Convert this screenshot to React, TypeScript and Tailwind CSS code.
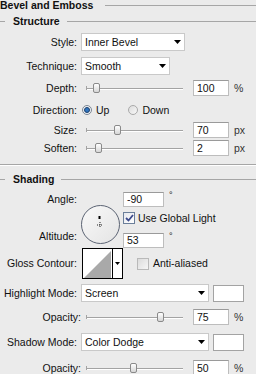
import React from 'react';

const FONT = { fontFamily: '"Liberation Sans", Arial, sans-serif' };

function Label({ text, w = 'w-[77px]' }: { text: string; w?: string }) {
    return <span className={`${w} shrink-0 text-right whitespace-nowrap`}>{text}</span>;
}

function Arrow() {
    return (
        <svg width="7" height="4" viewBox="0 0 7 4" className="shrink-0">
            <path d="M0 0H7L3.5 4Z" fill="#000" />
        </svg>
    );
}

function Dropdown({ text, w }: { text: string; w: string }) {
    return (
        <div className={`${w} h-[18px] ml-[4px] bg-white border border-[#c9c9c9] flex items-center pl-[3px] pr-[3px]`}>
            <span className="flex-1">{text}</span>
            <Arrow />
        </div>
    );
}

function NumInput({ value, w = 'w-[36px]', h = 'h-[16px]' }: { value: string; w?: string; h?: string }) {
    return (
        <div className={`${w} ${h} bg-white border border-[#bdbdbd] border-t-[#9a9a9a] flex items-center pl-[3px]`}>
            {value}
        </div>
    );
}

function Slider({ pct }: { pct: number }) {
    return (
        <div className="relative w-[97px] h-[16px] ml-[5px]">
            <div className="absolute left-0 right-0 top-[8px] h-px bg-[#a3a3a3]" />
            <div className="absolute left-0 right-0 top-[9px] h-px bg-white" />
            <div className="absolute left-0 top-[6px] w-px h-[4px] bg-[#a3a3a3]" />
            <div
                className="absolute top-[3px] w-[7px] h-[10px] -ml-[3px] rounded-[2px] border border-[#8a8a8a] bg-gradient-to-b from-white to-[#d6d6d6]"
                style={{ left: `${pct}%` }}
            />
        </div>
    );
}

function SliderRow({ label, pct, value, unit, mt, lw = 'w-[77px]', lml = 'ml-[4px]' }: {
    label: string; pct: number; value: string; unit: string; mt: string; lw?: string; lml?: string;
}) {
    return (
        <div className={`flex items-center h-[16px] ${mt}`}>
            <Label text={label} w={lw} />
            <div className={lml} />
            <Slider pct={pct} />
            <div className="ml-[10px]">
                <NumInput value={value} />
            </div>
            <span className="ml-[5px] text-[#333]">{unit}</span>
        </div>
    );
}

function SectionTitle({ text, mt, lead }: { text: string; mt: string; lead: boolean }) {
    return (
        <div className={`flex items-center h-[10px] ${mt}`}>
            {lead && <div className="w-[5px] h-px bg-[#a6a6a6] mr-[8px]" />}
            <span className="font-bold text-[10.5px] whitespace-nowrap">{text}</span>
            <div className={`flex-1 h-px bg-[#a6a6a6] ${lead ? 'ml-[7px]' : 'ml-[12px]'}`} />
        </div>
    );
}

function Checkbox({ checked }: { checked: boolean }) {
    return (
        <div className={`w-[12px] h-[12px] shrink-0 border flex items-center justify-center ${checked ? 'border-[#6b7f9a] bg-gradient-to-br from-[#e6e8ee] to-white' : 'border-[#b9b9b9] bg-gradient-to-br from-[#dcdcdc] to-[#f6f6f6]'}`}>
            {checked && (
                <svg width="9" height="8" viewBox="0 0 9 8">
                    <path d="M1 4L3.5 6.5L8 1" stroke="#3c4a8c" strokeWidth="1.8" fill="none" />
                </svg>
            )}
        </div>
    );
}

export default function App() {
    return (
        <div className="w-[256px] h-[374px] overflow-hidden bg-[#ebebeb] text-[10.5px] leading-none text-[#111]" style={FONT}>
            <SectionTitle text="Bevel and Emboss" mt="mt-0" lead={false} />
            <SectionTitle text="Structure" mt="mt-[6px]" lead />

            <div className="flex items-center h-[18px] mt-[7px]">
                <Label text="Style:" />
                <Dropdown text="Inner Bevel" w="w-[104px]" />
            </div>
            <div className="flex items-center h-[18px] mt-[6px]">
                <Label text="Technique:" />
                <Dropdown text="Smooth" w="w-[89px]" />
            </div>

            <SliderRow label="Depth:" pct={10} value="100" unit="%" mt="mt-[5px]" />

            <div className="flex items-center h-[16px] mt-[6px]">
                <Label text="Direction:" />
                <div className="ml-[5px] w-[10px] h-[10px] rounded-full border border-[#7c8794] bg-[#eef0f3] flex items-center justify-center">
                    <div className="w-[6px] h-[6px] rounded-full bg-[#2f75bf] border border-[#1d3f6b]" />
                </div>
                <span className="ml-[4px]">Up</span>
                <div className="ml-[19px] w-[10px] h-[10px] rounded-full border border-[#a9a9a9] bg-gradient-to-br from-[#dcdcdc] to-[#f8f8f8]" />
                <span className="ml-[4px]">Down</span>
            </div>

            <SliderRow label="Size:" pct={32} value="70" unit="px" mt="mt-[4px]" />
            <SliderRow label="Soften:" pct={12} value="2" unit="px" mt="mt-[2px]" />

            <div className="mt-[8px] h-px bg-[#a6a6a6]" />
            <div className="h-px bg-white" />

            <SectionTitle text="Shading" mt="mt-[8px]" lead />

            <div className="flex h-[56px] mt-[8px]">
                <div className="w-[77px] shrink-0 flex flex-col text-right">
                    <div className="h-[15px] flex items-center justify-end">Angle:</div>
                    <div className="mt-auto mb-[4px] h-[15px] flex items-center justify-end">Altitude:</div>
                </div>
                <div className="relative ml-[4px] mt-[13px] w-[39px] h-[39px] rounded-full border-[1.5px] border-[#5c6474] bg-gradient-to-br from-[#f9f9f9] to-[#e4e4e4]">
                    <svg className="absolute left-0 top-0" width="36" height="36" viewBox="0 0 36 36">
                        <rect x="16.5" y="10" width="2" height="3" fill="#000" />
                        <path d="M18 16V22M15 19H21" stroke="#222" strokeWidth="1" strokeDasharray="1 1" />
                    </svg>
                </div>
                <div className="ml-[3px] flex flex-col">
                    <div className="flex">
                        <NumInput value="-90" w="w-[41px]" h="h-[15px]" />
                        <span className="ml-[5px] -mt-[1px] text-[9px]">°</span>
                    </div>
                    <div className="flex items-center mt-[5px] h-[12px]">
                        <Checkbox checked />
                        <span className="ml-[3px] whitespace-nowrap">Use Global Light</span>
                    </div>
                    <div className="flex mt-auto">
                        <NumInput value="53" w="w-[41px]" h="h-[15px]" />
                        <span className="ml-[5px] -mt-[1px] text-[9px]">°</span>
                    </div>
                </div>
            </div>

            <div className="flex items-center h-[31px]">
                <Label text="Gloss Contour:" />
                <div className="ml-[5px] w-[41px] h-[31px] border border-black bg-white flex">
                    <svg width="29" height="29" viewBox="0 0 29 29" className="shrink-0">
                        <path d="M1 29L28 2V29Z" fill="#a9a9a9" />
                    </svg>
                    <div className="w-px h-full bg-black" />
                    <div className="flex-1 flex items-center justify-center">
                        <svg width="5" height="3" viewBox="0 0 5 3">
                            <path d="M0 0H5L2.5 3Z" fill="#000" />
                        </svg>
                    </div>
                </div>
                <div className="ml-[14px]">
                    <Checkbox checked={false} />
                </div>
                <span className="ml-[4px] whitespace-nowrap">Anti-aliased</span>
            </div>

            <div className="flex items-center h-[18px] mt-[5px]">
                <Label text="Highlight Mode:" />
                <Dropdown text="Screen" w="w-[128px]" />
                <div className="ml-[4px] w-[31px] h-[17px] bg-white border border-[#a3a3a3]" />
            </div>
            <SliderRow label="Opacity:" pct={76} value="75" unit="%" mt="mt-[7px]" lw="w-[81px]" lml="ml-0" />

            <div className="flex items-center h-[18px] mt-[8px]">
                <Label text="Shadow Mode:" />
                <Dropdown text="Color Dodge" w="w-[128px]" />
                <div className="ml-[4px] w-[31px] h-[17px] bg-white border border-[#a3a3a3]" />
            </div>
            <SliderRow label="Opacity:" pct={48} value="50" unit="%" mt="mt-[9px]" lw="w-[81px]" lml="ml-0" />
        </div>
    );
}
